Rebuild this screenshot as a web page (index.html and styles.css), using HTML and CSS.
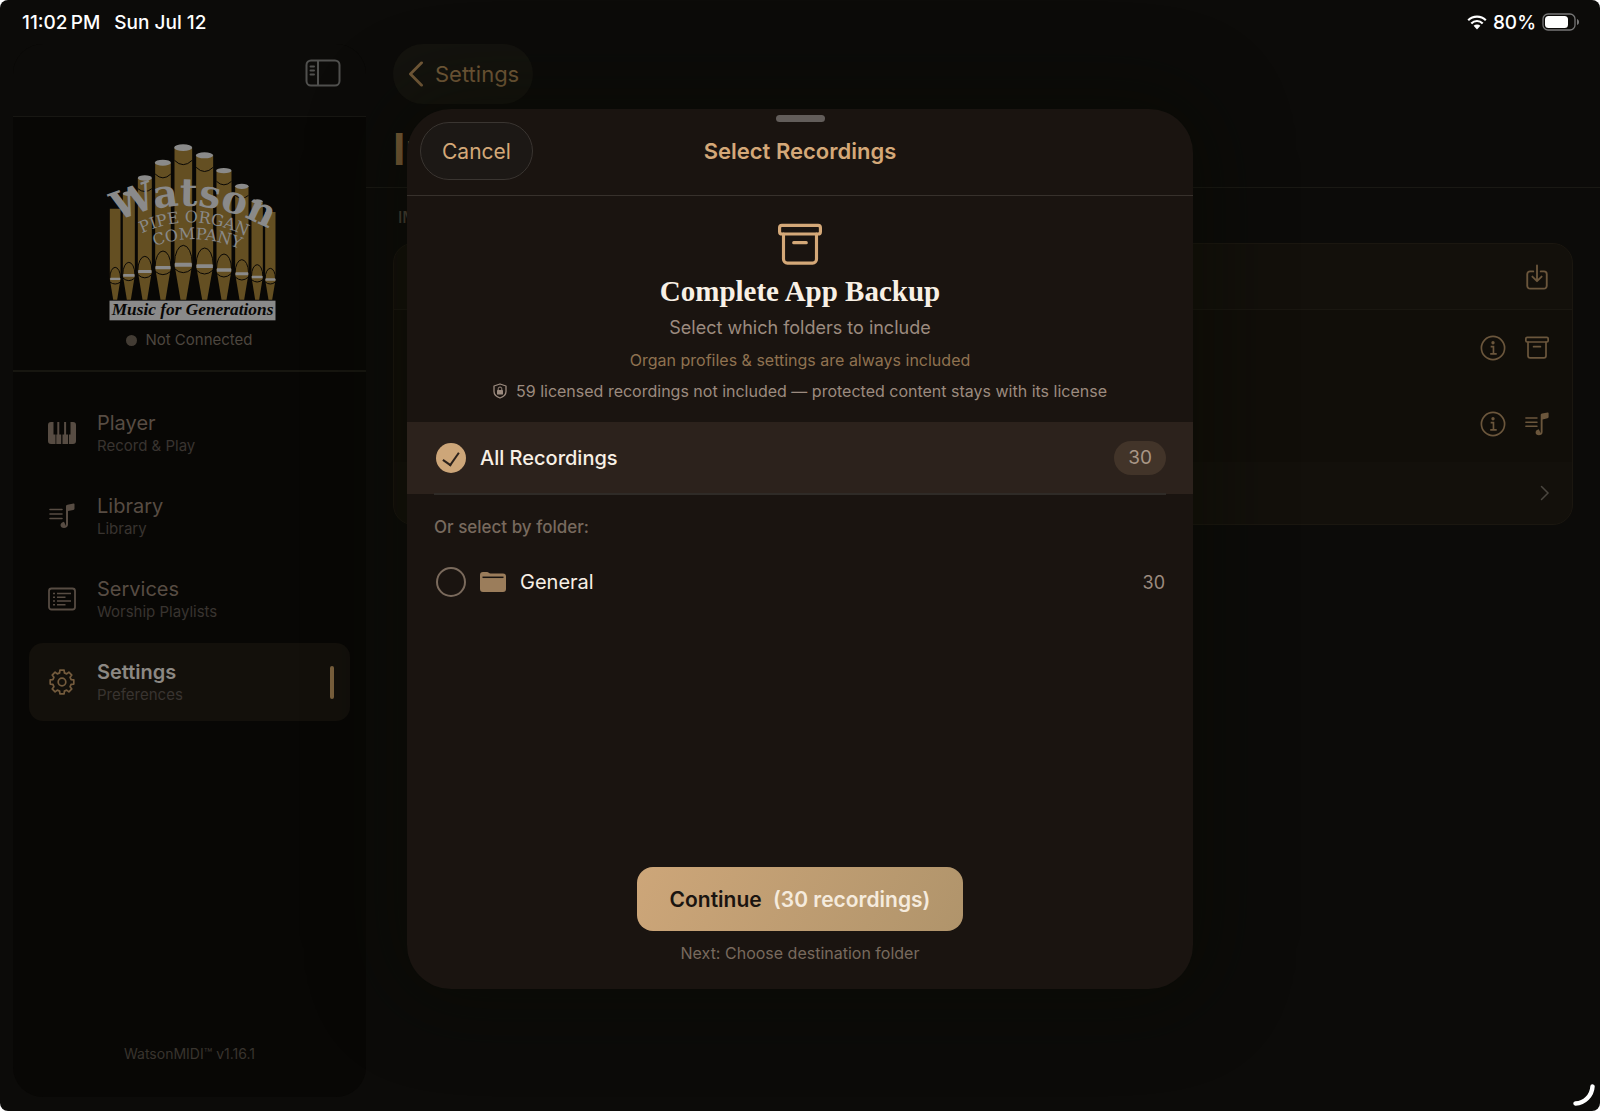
FILE: index.html
```html
<!DOCTYPE html>
<html lang="en">
  <head>
    <meta charset="UTF-8" />
    <meta name="viewport" content="width=device-width, initial-scale=1.0" />
    <title>WatsonMIDI</title>
    <link rel="stylesheet" href="styles.css">
  </head>
  <body>
    <!-- shared icons -->
    <svg class="sprite" aria-hidden="true">
      <symbol id="icon-archive" viewBox="0 0 28 28">
        <g fill="none" stroke="currentColor" stroke-width="2" stroke-linejoin="round" stroke-linecap="round">
          <rect x="1" y="1.5" width="26" height="5.5" rx="1.5" />
          <path d="M3.5 7V23a2.5 2.5 0 0 0 2.5 2.5H22a2.5 2.5 0 0 0 2.5-2.5V7M10 12.500h8" />
        </g>
      </symbol>
      <symbol id="icon-playlist" viewBox="0 0 28 28">
        <path d="M2 7.5h12M2 12h12M2 16.5h12" stroke="currentColor" stroke-width="1.6" stroke-linecap="round" />
        <path d="M18 24V4.5c0-1 .5-1.500 1.500-1.700l6-1.300c.7-.1 1 .2 1 .8v4.200c0 .8-.4 1.200-1.200 1.400l-5.300 1.200V22.500c0 2.200-1.700 3.600-4 3.600-2 0-3.500-1.200-3.500-3s1.500-3.100 3.500-3.400z" fill="currentColor" />
      </symbol>
      <symbol id="icon-info" viewBox="0 0 28 28">
        <circle cx="14" cy="14" r="12.5" fill="none" stroke="currentColor" stroke-width="1.8" />
        <circle cx="14" cy="8.3" r="1.8" fill="currentColor" />
        <path d="M11.5 12.5h3v7.500M11 20.300h7" fill="none" stroke="currentColor" stroke-width="1.8" />
      </symbol>
    </svg>

    <div class="screen">
      <header class="status-bar">
        <div class="status-left">
          <span>11:02&#8239;PM</span>
          <span>Sun Jul 12</span>
        </div>
        <div class="status-right">
          <svg class="wifi" viewBox="0 0 20 15">
            <path d="M1.200 5.200a12.500 12.500 0 0 1 17.600 0M4.300 8.400a8 8 0 0 1 11.400 0" fill="none" stroke="currentColor" stroke-width="2.200" />
            <path d="M6.600 10.800a4.900 4.900 0 0 1 6.800 0L10 14.400z" fill="currentColor" />
          </svg>
          <span>80%</span>
          <svg class="battery" viewBox="0 0 38 18">
            <rect x="1" y="1" width="32" height="16" rx="5" fill="none" stroke="#777" stroke-width="1.300" />
            <rect x="3" y="3" width="23" height="12" rx="3.500" fill="#fff" />
            <path d="M35 6v6c1.300-.5 2-1.500 2-3s-.7-2.500-2-3z" fill="#777" />
          </svg>
        </div>
      </header>

      <aside class="sidebar">
        <div class="sidebar-top">
          <button class="toggle-btn" aria-label="Toggle sidebar">
            <svg viewBox="0 0 36 28">
              <g fill="none" stroke="currentColor" stroke-width="2" stroke-linecap="round">
                <rect x="1.500" y="1.500" width="33" height="25" rx="4.500" />
                <path d="M13 2v24M5.500 7.500h3.500M5.500 11.500h3.500M5.500 15.500h3.500" />
              </g>
            </svg>
          </button>
        </div>

        <div class="brand">
          <svg class="logo" viewBox="50 35 560 540" role="img" aria-label="Watson Pipe Organ Company">
            <g fill="#644f22">
              <path d="M91 235V446L101 508H113L123 446V235z" />
              <path d="M130 190V435L142 508H154L166 435V190z" />
              <path d="M175 143V423L189 508H203L217 423V143z" />
              <path d="M227 97V412L243 508H258L274 412V97z" />
              <path d="M285 52V403L303 508H320L338 403V52z" />
              <path d="M350 75V407L368 508H383L401 407V75z" />
              <path d="M411 121V419L426 508H441L456 419V121z" />
              <path d="M467 168V430L480 508H494L507 430V168z" />
              <path d="M516 213V440L527 508H539L550 440V213z" />
              <path d="M557 245V448L567 508H578L588 448V245z" />
            </g>
            <g fill="#8a8a8a">
              <ellipse cx="148" cy="190" rx="18" ry="7" />
              <ellipse cx="196" cy="143" rx="21" ry="8" />
              <ellipse cx="250" cy="97" rx="24" ry="9" />
              <ellipse cx="311" cy="52" rx="27" ry="10" />
              <ellipse cx="375" cy="75" rx="26" ry="9" />
              <ellipse cx="433" cy="121" rx="23" ry="8" />
              <ellipse cx="487" cy="168" rx="20" ry="8" />
              <ellipse cx="533" cy="213" rx="17" ry="6" />
              <path d="M92 442h30v7H92zM131 431h34v8h-34zM176 419h40v9h-40zM228 407h45v10h-45zM286 397h51v12h-51zM351 402h49v11h-49zM412 414h43v10h-43zM468 426h38v9h-38zM517 436h32v8h-32zM558 444h30v7h-30z" />
            </g>
            <g fill="none" stroke="#0a0805" stroke-width="3">
              <path d="M175 175Q196 192 217 175M227 131Q250 154 274 131M285 90Q311 116 338 90M350 111Q375 136 401 111M411 153Q433 174 456 153M467 195Q487 212 507 195" />
              <path d="M91 443A16 32 0 0 1 123 443M130 432A18 36 0 0 1 166 432M175 420A21 42 0 0 1 217 420M227 408A23 45 0 0 1 274 408M285 399A26 53 0 0 1 338 399M350 403A25 49 0 0 1 401 403M411 415A22 43 0 0 1 456 415M467 427A20 39 0 0 1 507 427M516 437A17 34 0 0 1 550 437M557 445A15 30 0 0 1 588 445" />
              <path d="M91 455Q107 467 123 455M130 443Q148 459 166 443M175 433Q196 452 217 433M227 423Q250 443 274 423M285 415Q311 439 338 415M350 419Q375 443 401 419M411 429Q433 451 456 429M467 440Q487 458 507 440M516 448Q533 462 550 448M557 455Q572 467 588 455" />
            </g>
            <path id="arc-name" d="M74 296Q330 146 606 318" fill="none" />
            <path id="arc-pipe" d="M142 334Q335 214 545 343" fill="none" />
            <path id="arc-company" d="M200 358Q345 292 505 366" fill="none" />
            <text class="logo-name"><textPath href="#arc-name" startOffset="50%">Watson</textPath></text>
            <text class="logo-sub"><textPath href="#arc-pipe" startOffset="50%">PIPE ORGAN</textPath></text>
            <text class="logo-sub"><textPath href="#arc-company" startOffset="50%">COMPANY</textPath></text>
            <rect x="90" y="511" width="498" height="59" fill="#8a8a8a" />
            <text class="logo-tag" x="339" y="554">Music for Generations</text>
          </svg>
          <p class="connection"><span class="dot"></span>Not Connected</p>
        </div>

        <nav class="nav">
          <a class="nav-item" href="#player">
            <svg viewBox="0 0 28 28">
              <path d="M3 3h2.500v12.500h2V25H3a3 3 0 0 1-3-3V6a3 3 0 0 1 3-3z" fill="currentColor" />
              <path d="M9.300 3h2v12.500h1.900V25H8.300v-9.500h1zM16.100 3h2v12.500h2V25h-5.600v-9.500h1.600zM22.500 3H25a3 3 0 0 1 3 3v16a3 3 0 0 1-3 3h-4v-9.500h1.500z" fill="currentColor" />
            </svg>
            <span class="nav-text"><b>Player</b><small>Record &amp; Play</small></span>
          </a>
          <a class="nav-item" href="#library">
            <svg viewBox="0 0 28 28"><use href="#icon-playlist" /></svg>
            <span class="nav-text"><b>Library</b><small>Library</small></span>
          </a>
          <a class="nav-item" href="#services">
            <svg viewBox="0 0 28 28">
              <g fill="none" stroke="currentColor" stroke-width="1.500">
                <rect x="1" y="3.500" width="26" height="21" rx="2.500" stroke-width="1.800" />
                <path d="M5 8.500h2M5 12.200h2M5 16h2M5 19.700h2M9 8.500h14M9 12.200h8.500M9 16h14M9 19.700h8.500" />
              </g>
            </svg>
            <span class="nav-text"><b>Services</b><small>Worship Playlists</small></span>
          </a>
          <a class="nav-item active" href="#settings">
            <svg viewBox="-14 -14 28 28">
              <path d="M-2.400-9.100L-2.100-11.800H2.100L2.400-9.100L4.700-8.100L6.900-9.800L9.800-6.900L8.100-4.700L9.100-2.400L11.800-2.100V2.100L9.100 2.400L8.100 4.700L9.800 6.900L6.900 9.800L4.700 8.100L2.400 9.100L2.100 11.800H-2.100L-2.400 9.100L-4.700 8.100L-6.900 9.800L-9.800 6.900L-8.100 4.700L-9.100 2.400L-11.800 2.100V-2.100L-9.100-2.400L-8.100-4.700L-9.800-6.900L-6.900-9.800L-4.700-8.100Z" fill="none" stroke="currentColor" stroke-width="1.700" stroke-linejoin="round" />
              <circle r="3.800" fill="none" stroke="currentColor" stroke-width="1.700" />
            </svg>
            <span class="nav-text"><b>Settings</b><small>Preferences</small></span>
          </a>
        </nav>

        <p class="version">WatsonMIDI™ v1.16.1</p>
      </aside>

      <main class="content">
        <div class="content-top">
          <button class="back-btn">
            <svg viewBox="0 0 16 28"><path d="M14 2L2 14l12 12" fill="none" stroke="currentColor" stroke-width="3" stroke-linecap="round" stroke-linejoin="round" /></svg>
            Settings
          </button>
          <h1>Import</h1>
        </div>
        <div class="content-body">
          <h2>IMPORT</h2>
          <div class="card">
            <div class="card-row first">
              <button class="icon-btn" aria-label="Import">
                <svg viewBox="0 0 28 28">
                  <path d="M10 8H6.500A3 3 0 0 0 3.500 11v12.500a3 3 0 0 0 3 3h15a3 3 0 0 0 3-3V11a3 3 0 0 0-3-3H18M14 1.500v16M9 13.500l5 5 5-5" fill="none" stroke="currentColor" stroke-width="2" stroke-linecap="round" stroke-linejoin="round" />
                </svg>
              </button>
            </div>
            <div class="card-row dim">
              <button class="icon-btn" aria-label="About backup"><svg><use href="#icon-info" /></svg></button>
              <button class="icon-btn small" aria-label="Backup"><svg><use href="#icon-archive" /></svg></button>
            </div>
            <div class="card-row dim">
              <button class="icon-btn" aria-label="About playlists"><svg><use href="#icon-info" /></svg></button>
              <button class="icon-btn" aria-label="Playlists"><svg><use href="#icon-playlist" /></svg></button>
            </div>
            <div class="card-row last">
              <svg class="chevron" viewBox="0 0 10 16"><path d="M1.500 1.500L8 8l-6.500 6.500" fill="none" stroke="currentColor" stroke-width="1.500" stroke-linecap="round" /></svg>
            </div>
          </div>
        </div>
      </main>

      <div class="modal" role="dialog" aria-labelledby="modal-title">
        <div class="modal-header">
          <span class="grabber"></span>
          <button class="cancel-btn">Cancel</button>
          <h2 id="modal-title">Select Recordings</h2>
        </div>

        <div class="intro">
          <svg class="intro-icon"><use href="#icon-archive" /></svg>
          <h3>Complete App Backup</h3>
          <p class="lead">Select which folders to include</p>
          <p class="note">Organ profiles &amp; settings are always included</p>
          <p class="license">
            <svg viewBox="0 0 14 16">
              <path d="M7 1l6 2v5.500c0 3-2.500 5.200-6 6.500-3.500-1.300-6-3.500-6-6.500V3z" fill="none" stroke="currentColor" stroke-width="1.300" stroke-linejoin="round" />
              <rect x="4" y="7" width="6" height="4.500" rx=".6" fill="currentColor" />
              <path d="M5.200 7V5.800a1.800 1.800 0 0 1 3.600 0V7" fill="none" stroke="currentColor" />
            </svg>
            59 licensed recordings not included — protected content stays with its license
          </p>
        </div>

        <label class="option all">
          <input type="checkbox" checked />
          <span class="option-name">All Recordings</span>
          <span class="badge">30</span>
        </label>
        <hr class="divider" />

        <h4>Or select by folder:</h4>
        <label class="option">
          <input type="checkbox" />
          <svg class="folder" viewBox="0 0 26 20">
            <path d="M0 3a3 3 0 0 1 3-3h4c1.500 0 2 1.600 3.500 1.600H23a3 3 0 0 1 3 3V17a3 3 0 0 1-3 3H3a3 3 0 0 1-3-3z" fill="#9b7d5b" />
            <path d="M2.500 5.300h21" stroke="#1a1410" stroke-width="1.500" />
          </svg>
          <span class="option-name">General</span>
          <span class="count">30</span>
        </label>

        <div class="modal-footer">
          <button class="continue-btn">Continue <span>(30 recordings)</span></button>
          <p>Next: Choose destination folder</p>
        </div>
      </div>

      <svg class="corner-mark" viewBox="0 0 24 24"><path d="M3.500 20.500A18 18 0 0 0 20.500 3.500" fill="none" stroke="#fff" stroke-width="4.500" stroke-linecap="round" /></svg>
    </div>
  </body>
</html>
```
FILE: styles.css
```css
* {
  margin: 0;
  padding: 0;
  box-sizing: border-box;
}

body {
  background: #fff;
  font-family: Inter, "Liberation Sans", sans-serif;
}

button {
  border: none;
  background: none;
  font: inherit;
  color: inherit;
  cursor: pointer;
}

.sprite {
  display: none;
}

.screen {
  position: relative;
  min-height: 100vh;
  display: grid;
  grid-template-columns: 366px 1fr;
  grid-template-rows: 44px 1fr;
  background: #0c0b09;
  border-radius: 8px;
  overflow: hidden;
}

/* status bar */
.status-bar {
  grid-column: 1 / 3;
  display: flex;
  justify-content: space-between;
  align-items: center;
  padding: 0 20px 0 22px;
  color: #fff;
  font-size: 19px;
  font-weight: 500;
}

.status-left {
  display: flex;
  gap: 14px;
}

.status-right {
  display: flex;
  align-items: center;
  gap: 6px;
}

.wifi {
  width: 20px;
  height: 15px;
}

.battery {
  width: 38px;
  height: 18px;
}

/* sidebar */
.sidebar {
  display: flex;
  flex-direction: column;
  margin: 0 0 14px 13px;
  background: #080705;
  border-radius: 30px;
  overflow: hidden;
}

.sidebar-top {
  height: 73px;
  display: flex;
  justify-content: flex-end;
  align-items: center;
  padding: 0 25px 14px 0;
  background: #0c0b09;
  border-bottom: 1px solid #181713;
}

.toggle-btn {
  color: #50504e;
}

.toggle-btn svg {
  display: block;
  width: 36px;
  height: 28px;
}

.brand {
  display: flex;
  flex-direction: column;
  align-items: center;
  gap: 9px;
  padding: 25px 0 21px;
  border-bottom: 2px solid #171610;
}

.logo {
  width: 187px;
  height: 180px;
  overflow: visible;
}

.logo text {
  text-anchor: middle;
  fill: #8a8a8a;
}

.logo .logo-name {
  font: bold 116px "DejaVu Serif", serif;
}

.logo .logo-sub {
  font: 48px "DejaVu Serif", serif;
}

.logo .logo-tag {
  font: italic bold 52px "Liberation Serif", serif;
  fill: #080705;
}

.connection {
  display: flex;
  align-items: center;
  gap: 8px;
  font-size: 15px;
  line-height: 18px;
  color: #4d463f;
}

.dot {
  width: 11px;
  height: 11px;
  border-radius: 50%;
  background: #433c34;
}

.nav {
  display: flex;
  flex-direction: column;
  gap: 5px;
  padding: 22px 16px;
}

.nav-item {
  display: flex;
  align-items: center;
  gap: 21px;
  height: 78px;
  padding: 0 16px 0 19px;
  border-radius: 14px;
  color: #574c43;
  text-decoration: none;
}

.nav-item svg {
  width: 28px;
  height: 28px;
}

.nav-text {
  flex: 1;
  display: flex;
  flex-direction: column;
}

.nav-text b {
  font-size: 20px;
  line-height: 26px;
  font-weight: 400;
}

.nav-text small {
  font-size: 15px;
  line-height: 20px;
  color: #393430;
}

.nav-item.active {
  background: #13100b;
  color: #745b3d;
}

.nav-item.active b {
  color: #8c8883;
  font-weight: 600;
}

.nav-item.active::after {
  content: "";
  width: 4px;
  height: 33px;
  border-radius: 2px;
  background: #7a603d;
}

.version {
  margin-top: auto;
  padding-bottom: 34px;
  text-align: center;
  font-size: 14px;
  line-height: 18px;
  color: #39342e;
}

/* page behind the dialog */
.content-top {
  height: 144px;
  border-bottom: 1px solid #1a1914;
}

.back-btn {
  display: flex;
  align-items: center;
  gap: 11px;
  height: 60px;
  margin-left: 27px;
  padding: 0 14px 0 15px;
  border-radius: 30px;
  background: #14130e;
  color: #765c3a;
  font-size: 22px;
}

.back-btn svg {
  width: 16px;
  height: 26px;
}

.content-top h1 {
  margin: 18px 0 0 27px;
  font-size: 44px;
  line-height: 54px;
  color: #7d6039;
}

.content-body {
  padding: 19px 27px 0;
}

.content-body h2 {
  padding-left: 5px;
  font-size: 16px;
  line-height: 20px;
  font-weight: 500;
  color: #4a4338;
}

.card {
  margin-top: 16px;
  border: 1px solid #1b1710;
  border-radius: 20px;
  background: #13100b;
  overflow: hidden;
}

.card-row {
  display: flex;
  justify-content: flex-end;
  align-items: center;
  gap: 18px;
  height: 76px;
  padding-right: 22px;
  color: #6b563c;
}

.card-row.first {
  height: 66px;
  border-bottom: 1px solid #1a1711;
}

.card-row.dim {
  background: #110e09;
}

.card-row.last {
  height: 62px;
}

.icon-btn svg {
  display: block;
  width: 26px;
  height: 26px;
}

.icon-btn.small svg {
  width: 24px;
  height: 24px;
}

.icon-btn.small {
  padding: 1px;
}

.chevron {
  width: 10px;
  height: 16px;
  color: #4a463f;
}

/* dialog */
.modal {
  position: absolute;
  top: 109px;
  bottom: 122px;
  left: 0;
  right: 0;
  width: 786px;
  max-width: 92%;
  margin: 0 auto;
  display: flex;
  flex-direction: column;
  border-radius: 44px;
  background: #1a1410;
  overflow: hidden;
  box-shadow: 0 0 80px 20px rgba(8, 12, 0, 0.45);
}

.modal-header {
  display: grid;
  grid-template-columns: 1fr auto 1fr;
  grid-template-rows: 13px 58px;
  height: 87px;
  padding: 0 13px;
  border-bottom: 1px solid #37312c;
}

.grabber {
  grid-column: 1 / 4;
  justify-self: center;
  align-self: end;
  width: 49px;
  height: 7px;
  border-radius: 4px;
  background: #625d5a;
}

.cancel-btn {
  justify-self: start;
  padding: 0 21px;
  border: 1px solid #3a3531;
  border-radius: 30px;
  background: #1c1815;
  color: #d4a878;
  font-size: 21px;
}

.modal-header h2 {
  align-self: center;
  font-size: 22px;
  font-weight: 600;
  color: #d4a878;
}

.intro {
  display: flex;
  flex-direction: column;
  align-items: center;
  height: 226px;
  padding-top: 27px;
  text-align: center;
}

.intro-icon {
  width: 44px;
  height: 44px;
  color: #d4a878;
}

.intro h3 {
  margin-top: 7px;
  font: bold 29px/34px "Liberation Serif", serif;
  color: #f8f0e5;
}

.lead {
  margin-top: 8px;
  font-size: 18px;
  line-height: 24px;
  color: #9c8b7f;
}

.note {
  margin-top: 10px;
  font-size: 16px;
  line-height: 20px;
  color: #8f7250;
}

.license {
  display: flex;
  align-items: center;
  gap: 9px;
  margin-top: 11px;
  font-size: 16px;
  line-height: 20px;
  color: #9c8b7f;
}

.license svg {
  width: 14px;
  height: 16px;
}

.option {
  display: flex;
  align-items: center;
  gap: 14px;
  height: 72px;
  padding: 0 28px 0 29px;
  color: #f8f0e5;
  font-size: 20px;
  cursor: pointer;
}

.option.all {
  background: #2c221c;
  padding-right: 27px;
  font-weight: 500;
}

.option input {
  appearance: none;
  display: grid;
  place-items: center;
  width: 30px;
  height: 30px;
  border: 2px solid #7a6a5c;
  border-radius: 50%;
}

.option input:checked {
  border: none;
  background: #cda679;
}

.option input:checked::after {
  content: "";
  width: 8px;
  height: 14px;
  margin-bottom: 3px;
  border: solid #2c221c;
  border-width: 0 2px 2px 0;
  transform: rotate(35deg);
}

.option-name {
  flex: 1;
}

.badge {
  padding: 5px 14px;
  border-radius: 17px;
  background: #423429;
  color: #a89686;
  font-size: 19px;
  line-height: 24px;
  font-weight: 400;
}

.divider {
  height: 2px;
  margin: -1px 27px 0;
  border: none;
  background: #2f2b27;
}

.modal h4 {
  padding: 21px 27px 0;
  font-size: 17px;
  line-height: 22px;
  font-weight: 500;
  color: #786a5e;
}

.modal h4 + .option {
  height: 88px;
}

.folder {
  width: 26px;
  height: 20px;
}

.count {
  font-size: 18px;
  color: #9c8b7f;
}

.modal-footer {
  display: flex;
  flex-direction: column;
  align-items: center;
  gap: 12px;
  margin-top: auto;
  padding-bottom: 26px;
}

.continue-btn {
  height: 64px;
  padding: 0 33px;
  border-radius: 16px;
  background: linear-gradient(120deg, #cda679, #b0946b);
  color: #1a1410;
  font-size: 21px;
  font-weight: 600;
}

.continue-btn span {
  margin-left: 6px;
  color: #f5ebdd;
}

.modal-footer p {
  font-size: 16px;
  line-height: 20px;
  color: #786a5e;
}

.corner-mark {
  position: absolute;
  right: 4px;
  bottom: 4px;
  width: 24px;
  height: 24px;
}
```
